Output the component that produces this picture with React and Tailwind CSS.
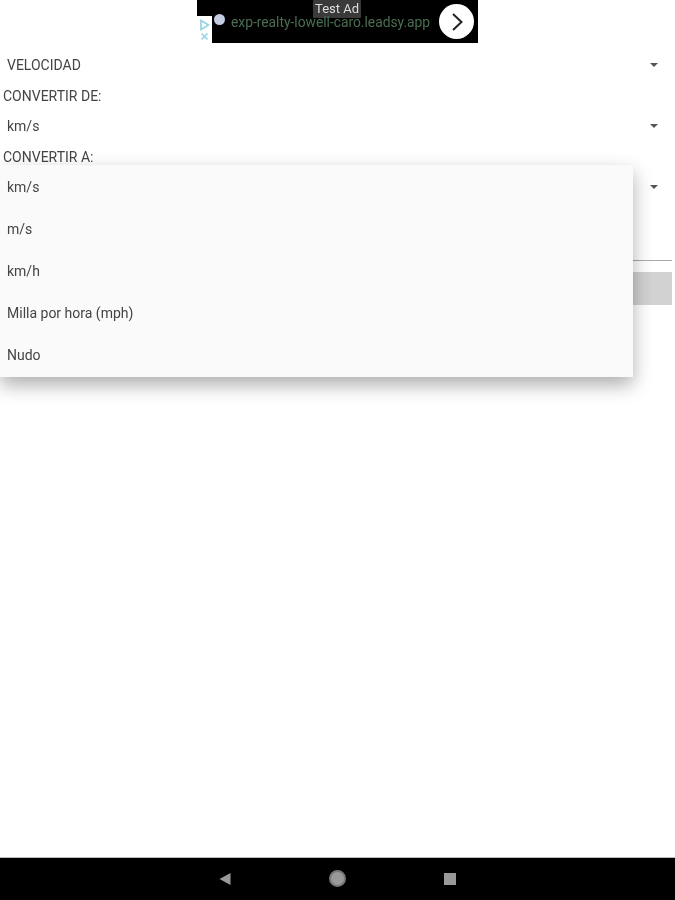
import React from "react";

const units = ["km/s", "m/s", "km/h", "Milla por hora (mph)", "Nudo"];

const Spinner = ({ value, height = "h-[40px]" }) => (
  <div className={`flex ${height} items-center justify-between pl-[7px] pr-[17px]`}>
    <span>{value}</span>
    <span className="h-0 w-0 border-x-[4px] border-t-[4px] border-x-transparent border-t-[#555]" />
  </div>
);

const Label = ({ children, height = "h-[20px]" }) => (
  <div className={`flex ${height} items-center pl-[3px]`}>{children}</div>
);

const AdBanner = () => (
  <div className="flex justify-center">
    <div className="relative h-[43px] w-[281px] bg-black">
      <span className="absolute left-[116px] top-0 h-[18px] rounded-[1px] bg-[#3a3a3a] px-[2px] text-[13px] leading-[18px] text-[#ddd]">
        Test Ad
      </span>
      <div className="absolute bottom-0 left-0 flex h-[27px] w-[15px] flex-col items-center justify-center gap-[1px] bg-white">
        <svg width="11" height="12" viewBox="0 0 11 12">
          <path d="M2 1.5 L9.5 6 L2 10.5 Z" fill="none" stroke="#8fd3e4" strokeWidth="1.6" />
        </svg>
        <svg width="9" height="9" viewBox="0 0 9 9">
          <path d="M1.5 1.5 L7.5 7.5 M7.5 1.5 L1.5 7.5" stroke="#8fd3e4" strokeWidth="1.5" />
        </svg>
      </div>
      <span className="absolute left-[17px] top-[14px] h-[11px] w-[11px] rounded-full bg-[#c5cbe0]" />
      <span className="absolute left-[34px] top-[12px] text-[13.8px] leading-[20px] text-[#4a6e52]">
        exp-realty-lowell-caro.leadsy.app
      </span>
      <div className="absolute left-[242px] top-[4px] flex h-[35px] w-[35px] items-center justify-center rounded-full bg-white">
        <svg width="16" height="20" viewBox="0 0 16 20">
          <path d="M4 2 L12.5 10 L4 18" fill="none" stroke="#222" strokeWidth="2" />
        </svg>
      </div>
    </div>
  </div>
);

const NavBar = () => (
  <div className="mt-auto flex h-[43px] items-center border-t border-[#bbb] bg-black pb-[1px] pl-[219px]">
    <svg width="12" height="14" viewBox="0 0 12 14">
      <path d="M11.5 1 L0.5 7 L11.5 13 Z" fill="#999" />
    </svg>
    <span className="ml-[98px] h-[17px] w-[17px] rounded-full border-2 border-[#777] bg-[#999]" />
    <span className="ml-[98px] h-[12px] w-[12px] bg-[#999]" />
  </div>
);

export default function App() {
  return (
    <div className="relative flex h-[900px] w-[675px] flex-col overflow-hidden bg-white font-['Roboto',sans-serif] text-[14px] text-[#444] blur-[0.4px]">
      <AdBanner />
      <Spinner value="VELOCIDAD" height="h-[44px]" />
      <Label height="h-[18px]">CONVERTIR DE:</Label>
      <Spinner value="km/s" height="h-[42px]" />
      <Label>CONVERTIR A:</Label>
      <Spinner value="km/s" />
      <div className="mr-[3px] h-[54px] border-b border-[#aaa]" />
      <div className="ml-[3px] mr-[3px] mt-[11px] h-[33px] bg-[#d2d2d2]" />
      <NavBar />

      <div className="absolute left-0 top-[165px] w-[633px] bg-[#fafafa] py-[1px] shadow-[0_8px_18px_rgba(0,0,0,0.32)]">
        {units.map((unit) => (
          <div key={unit} className="flex h-[42px] items-center pl-[7px]">
            {unit}
          </div>
        ))}
      </div>
    </div>
  );
}
